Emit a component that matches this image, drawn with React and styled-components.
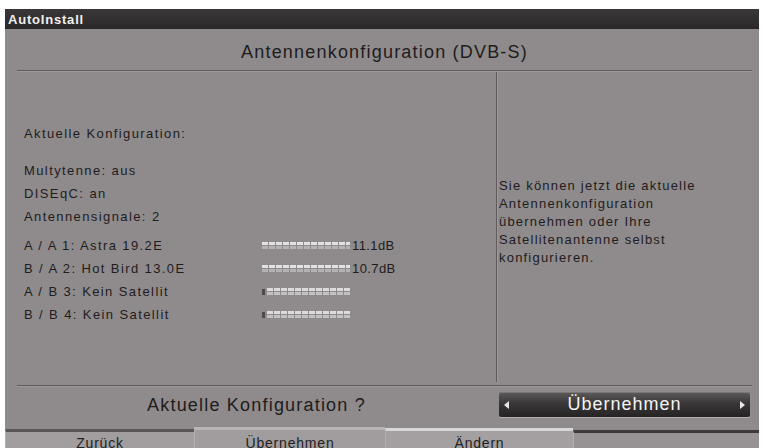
import styled, { createGlobalStyle } from 'styled-components';

const GlobalStyle = createGlobalStyle`
  html, body {
    margin: 0;
    padding: 0;
    background: #ffffff;
    overflow: hidden;
  }
  #root {
    width: 762px;
    height: 448px;
  }
`;

const Screen = styled.div`
  width: 762px;
  height: 448px;
  box-sizing: border-box;
  padding: 9px 3px 0 5px;
  display: flex;
  flex-direction: column;
  font-family: "Liberation Sans", Arial, sans-serif;
  color: #1e1c1d;
  overflow: hidden;
`;

const TitleBar = styled.div`
  flex: none;
  height: 20px;
  line-height: 21px;
  padding-left: 3px;
  background: linear-gradient(#3a3738, #2b2829);
  color: #f0f0f0;
  font-size: 13px;
  font-weight: bold;
  letter-spacing: 0.8px;
`;

const Panel = styled.div`
  flex: 1;
  min-height: 0;
  display: flex;
  flex-direction: column;
  background: #8f8b8c;
`;

const Heading = styled.h1`
  flex: none;
  margin: 0 7px 0 12px;
  height: 41px;
  box-sizing: border-box;
  padding-top: 11px;
  font-size: 18px;
  line-height: 24px;
  font-weight: normal;
  letter-spacing: 1.2px;
  text-align: center;
`;

const Rule = styled.div`
  flex: none;
  margin: 0 7px 0 12px;
  border-top: 1px solid #5f5b5c;
  border-bottom: 1px solid #9c9899;
`;

const Body = styled.div`
  flex: none;
  height: 313px;
  margin: 0 7px 0 12px;
  display: flex;
`;

const LeftColumn = styled.div`
  width: 479px;
  box-sizing: border-box;
  padding: 50px 0 0 7px;
  font-size: 13px;
  letter-spacing: 1.4px;
`;

const Line = styled.div`
  line-height: 23px;
  margin-top: ${(p) => p.$gap || 0}px;
`;

const SignalRow = styled.div`
  display: grid;
  grid-template-columns: 236px 88px auto;
  column-gap: 2px;
  align-items: center;
  height: 23px;
  margin-top: ${(p) => p.$gap || 0}px;
`;

const Bar = styled.div`
  position: relative;
  height: 7px;
  display: flex;
  flex-direction: column;
  justify-content: space-between;
  padding-left: ${(p) => (p.$empty ? 5 : 0)}px;
  box-sizing: border-box;

  &::before {
    content: "";
    display: ${(p) => (p.$empty ? 'block' : 'none')};
    position: absolute;
    left: 0;
    top: 1px;
    width: 3px;
    height: 6px;
    background: #4f4b4c;
  }
`;

const BarStrip = styled.div`
  height: 3px;
  background: repeating-linear-gradient(
    90deg,
    ${(p) => p.$color} 0 6px,
    transparent 6px 7px
  );
`;

const Value = styled.span`
  font-size: 13px;
  letter-spacing: 0.4px;
`;

const Divider = styled.div`
  width: 1px;
  margin-bottom: 3px;
  background: #5f5b5c;
  border-right: 1px solid #9c9899;
`;

const RightColumn = styled.div`
  flex: 1;
  padding: 105px 0 0 1px;
  font-size: 13px;
  line-height: 18px;
  letter-spacing: 1.2px;
`;

const Footer = styled.div`
  flex: none;
  height: 39px;
  margin: 0 7px 0 12px;
  display: flex;
  align-items: flex-start;
`;

const Question = styled.div`
  width: 479px;
  padding-top: 6px;
  line-height: 25px;
  font-size: 18px;
  letter-spacing: 1.2px;
  text-align: center;
`;

const ChoiceButton = styled.div`
  margin: 5px 0 0 3px;
  width: 251px;
  height: 25px;
  box-sizing: border-box;
  display: flex;
  align-items: center;
  justify-content: space-between;
  padding: 0 5px;
  border-radius: 2px;
  background: linear-gradient(#5e5b5c, #3a3738 45%, #262324);
  box-shadow: 0 1px 0 #b4b0b1, inset 0 1px 0 #7a7677;
  color: #f4f4f4;
  font-size: 18px;
  letter-spacing: 1px;
`;

const Arrow = styled.svg`
  width: 5px;
  height: 8px;
  flex: none;
`;

const TabRow = styled.div`
  flex: 1;
  display: flex;
  align-items: flex-end;
`;

const Tab = styled.div`
  width: ${(p) => p.$width}px;
  flex: none;
  align-self: stretch;
  margin-top: ${(p) => p.$offset}px;
  box-sizing: border-box;
  border-top: 3px solid ${(p) => p.$edge};
  border-left: 1px solid #b3afb0;
  background: ${(p) => p.$fill};
  padding-top: ${(p) => Math.max(0, 4 - p.$offset)}px;
  font-size: 14px;
  line-height: 20px;
  letter-spacing: 0.8px;
  text-align: center;
  color: #222;
`;

const signals = [
  { label: 'A / A 1: Astra 19.2E', value: '11.1dB', gap: 6 },
  { label: 'B / A 2: Hot Bird 13.0E', value: '10.7dB' },
  { label: 'A / B 3: Kein Satellit', empty: true },
  { label: 'B / B 4: Kein Satellit', empty: true },
];

const tabs = [
  { label: 'Zurück', width: 189, edge: '#5a5657', fill: '#a29e9f', offset: 3 },
  { label: 'Übernehmen', width: 191, edge: '#b9b5b6', fill: '#a19d9e', offset: 1 },
  { label: 'Ändern', width: 188, edge: '#d9d7d8', fill: '#a4a0a1', offset: 2 },
  { label: '', width: 186, edge: '#3d3a3b', fill: '#979394', offset: 4 },
];

function SignalBar({ empty }) {
  return (
    <Bar $empty={empty}>
      <BarStrip $color={empty ? '#dcdadb' : '#e4e2e3'} />
      <BarStrip $color={empty ? '#c4c1c2' : '#b5b2b3'} />
    </Bar>
  );
}

export default function App() {
  return (
    <>
      <GlobalStyle />
      <Screen>
        <TitleBar>AutoInstall</TitleBar>
        <Panel>
          <Heading>Antennenkonfiguration (DVB-S)</Heading>
          <Rule />
          <Body>
            <LeftColumn>
              <Line>Aktuelle Konfiguration:</Line>
              <Line $gap={14}>Multytenne: aus</Line>
              <Line>DISEqC: an</Line>
              <Line>Antennensignale: 2</Line>
              {signals.map((s) => (
                <SignalRow key={s.label} $gap={s.gap}>
                  <span>{s.label}</span>
                  <SignalBar empty={s.empty} />
                  <Value>{s.value}</Value>
                </SignalRow>
              ))}
            </LeftColumn>
            <Divider />
            <RightColumn>
              Sie können jetzt die aktuelle
              <br />
              Antennenkonfiguration
              <br />
              übernehmen oder Ihre
              <br />
              Satellitenantenne selbst
              <br />
              konfigurieren.
            </RightColumn>
          </Body>
          <Rule />
          <Footer>
            <Question>Aktuelle Konfiguration ?</Question>
            <ChoiceButton>
              <Arrow viewBox="0 0 5 8">
                <path d="M5 0 L0 4 L5 8 Z" fill="#e8e8e8" />
              </Arrow>
              <span>Übernehmen</span>
              <Arrow viewBox="0 0 5 8">
                <path d="M0 0 L5 4 L0 8 Z" fill="#e8e8e8" />
              </Arrow>
            </ChoiceButton>
          </Footer>
          <TabRow>
            {tabs.map((t, i) => (
              <Tab
                key={i}
                $width={t.width}
                $edge={t.edge}
                $fill={t.fill}
                $offset={t.offset}
              >
                {t.label}
              </Tab>
            ))}
          </TabRow>
        </Panel>
      </Screen>
    </>
  );
}
